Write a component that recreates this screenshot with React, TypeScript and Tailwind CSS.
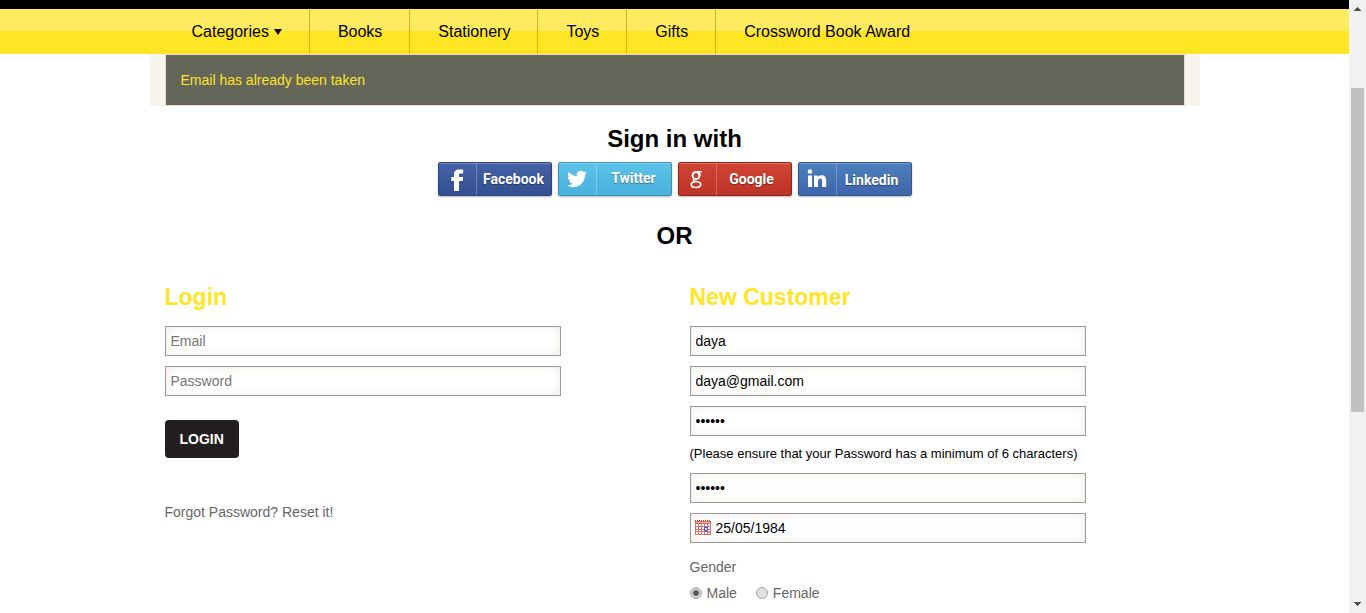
import React from "react";

const field =
  "block w-full h-[30px] border border-[#999] bg-white px-[5px] text-[14px] text-black placeholder:text-[#757575] outline-none shadow-[inset_0_0_10px_#eeece5]";

const navItems = ["Books", "Stationery", "Toys", "Gifts", "Crossword Book Award"];

function FacebookIcon() {
  return (
    <svg viewBox="0 0 24 24" className="size-6" fill="#fff" aria-hidden="true">
      <path d="M9 24v-10H6.300v-4H9V7.500C9 4 11 2.500 14 2.500h4.200v4H15.500c-1.200 0-1.500.5-1.500 1.500v2h4.200l-.5 4H14v10z" />
    </svg>
  );
}

function TwitterIcon() {
  return (
    <svg viewBox="0 0 24 24" className="size-5" fill="#fff" aria-hidden="true">
      <path d="M23.950 4.570a10 10 0 0 1-2.820.775 4.958 4.958 0 0 0 2.163-2.723c-.951.555-2.005.959-3.127 1.184a4.920 4.920 0 0 0-8.384 4.482C7.690 8.095 4.067 6.130 1.640 3.162a4.822 4.822 0 0 0-.666 2.475c0 1.710.870 3.213 2.188 4.096a4.904 4.904 0 0 1-2.228-.616v.060a4.923 4.923 0 0 0 3.946 4.827 4.996 4.996 0 0 1-2.212.085 4.936 4.936 0 0 0 4.604 3.417 9.867 9.867 0 0 1-6.102 2.105c-.390 0-.779-.023-1.170-.067a13.995 13.995 0 0 0 7.557 2.209c9.053 0 13.998-7.496 13.998-13.985 0-.210 0-.420-.015-.630A9.935 9.935 0 0 0 24 4.590z" />
    </svg>
  );
}

function GoogleIcon() {
  return (
    <svg viewBox="0 0 24 24" className="size-6" fill="none" stroke="#fff" aria-hidden="true">
      <ellipse cx="11" cy="8.500" rx="3.400" ry="3.600" strokeWidth="2" />
      <path d="M11.500 4.700h5.500" strokeWidth="1.400" />
      <path d="M13.500 5c1.300 1 1.700 2.200 1.600 3.600" strokeWidth="1.400" />
      <path d="M9.500 11.800c-1.300.8-1.900 2.200.2 2.700" strokeWidth="1.400" />
      <path d="M9.700 14.300c3 .5 6 .6 6 3s-2 3.200-4.800 3.200-4.700-.9-4.700-2.700c0-1.700 1.500-2.700 3.800-3.100" strokeWidth="1.700" />
    </svg>
  );
}

function LinkedinIcon() {
  return (
    <svg viewBox="0 0 24 24" className="size-6" fill="#fff" aria-hidden="true">
      <circle cx="5" cy="4.500" r="2.300" />
      <path d="M3 8.500h4V20H3zM9 8.500h3.800v1.600C13.500 8.900 14.700 8.200 16.400 8.200c3.300 0 4.800 2 4.800 5.300V20h-4v-6c0-1.600-.5-2.500-1.900-2.500S13 12.500 13 14v6H9z" />
    </svg>
  );
}

const socials = [
  { name: "Facebook", Icon: FacebookIcon, tone: "border-[#2b4580] bg-linear-to-b from-[#4462a6] to-[#344f90]", pad: "" },
  { name: "Twitter", Icon: TwitterIcon, tone: "border-[#3c8fb0] bg-linear-to-b from-[#5bc2e8] to-[#49b1de]", pad: "pb-[2px]" },
  { name: "Google", Icon: GoogleIcon, tone: "border-[#8f261c] bg-linear-to-b from-[#cf4435] to-[#bd3327]", pad: "pr-1" },
  { name: "Linkedin", Icon: LinkedinIcon, tone: "border-[#30548b] bg-linear-to-b from-[#4d80bd] to-[#3f65aa]", pad: "pt-[2px] pr-1" },
];

function CalendarIcon() {
  return (
    <svg viewBox="0 0 16 16" className="size-4" shapeRendering="crispEdges" aria-hidden="true">
      <rect x="0" y="1" width="16" height="14" fill="#dd6f69" />
      <path d="M0 0h1v1h-1zM2 0h1v1h-1zM4 0h1v1h-1zM6 0h1v1h-1zM8 0h1v1h-1zM10 0h1v1h-1zM12 0h1v1h-1zM14 0h1v1h-1z" fill="#9c3a35" />
      <path d="M1 2h14v1H1z" fill="#f0a39e" />
      <path d="M1 4h2v2H1zM4 4h2v2H4zM7 4h2v2H7zM10 4h2v2h-2zM13 4h2v2h-2zM1 7h2v2H1zM4 7h2v2H4zM7 7h2v2H7zM13 7h2v2h-2zM1 10h2v1H1zM4 10h2v1H4zM7 10h2v1H7zM13 10h2v1h-2zM1 12h2v2H1zM4 12h2v2H4zM7 12h2v2H7zM10 12h2v2h-2z" fill="#fff" />
      <path d="M9 7h4v4H9z" fill="#2f62d0" />
      <path d="M10 8h2v2h-2z" fill="#d5e4ff" />
      <path d="M13 12h2v2h-2z" fill="#f3c2be" />
    </svg>
  );
}

function Radio({ label, defaultChecked }: { label: string; defaultChecked?: boolean }) {
  return (
    <label className="flex items-center gap-[5px]">
      <input
        type="radio"
        name="gender"
        defaultChecked={defaultChecked}
        className="size-3 appearance-none rounded-full border border-[#a5a5a5] bg-[#e0e0e0] checked:bg-[radial-gradient(circle,#555_0_2px,#e0e0e0_4px)]"
      />
      {label}
    </label>
  );
}

export default function App() {
  return (
    <div className="flex h-screen overflow-hidden bg-white font-['Liberation_Sans',Arial,sans-serif] text-[14px] text-[#666]">
      <div className="min-w-0 flex-1 overflow-hidden">
        <header className="border-t-[9px] border-black">
          <nav className="bg-linear-to-b from-[#ffeb60] from-50% to-[#ffe523] to-50%">
            <ul className="mx-auto flex h-[45px] max-w-[1050px] px-[15px] text-[16px] text-black">
              <li className="border-r border-[#d0b712]">
                <a href="#categories" className="flex h-full items-center gap-[5px] px-[27px]">
                  Categories
                  <svg viewBox="0 0 8 6" className="h-1.5 w-2" aria-hidden="true">
                    <path d="M0 0h8L4 6z" />
                  </svg>
                </a>
              </li>
              {navItems.map((item) => (
                <li key={item} className="border-r border-[#d0b712] last:border-r-0">
                  <a href={"#" + item} className="flex h-full items-center pr-[27px] pl-7">
                    {item}
                  </a>
                </li>
              ))}
            </ul>
          </nav>
        </header>

        <main className="mx-auto max-w-[1050px]">
          <div className="bg-[#f8f5ee] px-[15px]">
            <p role="alert" className="border border-[#ebd9d5] bg-[#646659] px-[15px] py-[15px] leading-[20px] text-[#ffe523]">
              Email has already been taken
            </p>
          </div>

          <section className="pt-[18px] text-center text-black">
            <h2 className="text-[24px] leading-[30px] font-bold">Sign in with</h2>
            <div className="mt-2 flex justify-center gap-[6px]">
              {socials.map(({ name, Icon, tone, pad }) => (
                <button
                  key={name}
                  type="button"
                  className={`flex h-[34px] w-[114px] items-center rounded-[2px] border shadow-[0_1px_2px_#0004,inset_0_1px_0_#ffffff40] ${tone}`}
                >
                  <span className="flex h-full w-[38px] items-center justify-center border-r border-white/25">
                    <Icon />
                  </span>
                  <span className={`flex-1 font-[Roboto,sans-serif] text-[14px] font-bold text-white [text-shadow:0_1px_1px_#0006] ${pad}`}>
                    {name}
                  </span>
                </button>
              ))}
            </div>
            <h2 className="mt-[25px] text-[24px] leading-[30px] font-bold">OR</h2>
          </section>

          <div className="mt-[31px] grid grid-cols-2">
            <form className="px-[15px]">
              <h3 className="text-[23px] leading-[30px] font-bold text-[#ffe523]">Login</h3>
              <div className="mt-[14px] flex w-4/5 flex-col gap-[10px]">
                <input type="email" aria-label="Email" placeholder="Email" className={field} />
                <input type="password" aria-label="Password" placeholder="Password" className={field} />
              </div>
              <button type="button" className="mt-6 h-[38px] rounded-[4px] bg-[#231f20] px-[15px] font-bold text-white">
                LOGIN
              </button>
              <p className="mt-11 leading-[20px]">
                <a href="#reset">Forgot Password? Reset it!</a>
              </p>
            </form>

            <form className="px-[15px]">
              <h3 className="text-[23px] leading-[30px] font-bold text-[#ffe523]">New Customer</h3>
              <div className="mt-[14px] flex w-4/5 flex-col gap-[10px]">
                <input type="text" aria-label="Name" defaultValue="daya" className={field} />
                <input type="email" aria-label="Email" defaultValue="daya@gmail.com" className={field} />
                <input type="password" aria-label="Password" defaultValue="abcdef" className={field} />
                <p className="pb-[2px] text-[13px] leading-[15px] text-black">
                  (Please ensure that your Password has a minimum of 6 characters)
                </p>
                <input type="password" aria-label="Confirm password" defaultValue="abcdef" className={field} />
                <label className="flex h-[30px] items-center gap-[5px] border border-[#999] px-[4px] shadow-[inset_0_0_10px_#eeece5]">
                  <CalendarIcon />
                  <input type="text" aria-label="Date of birth" defaultValue="25/05/1984" className="min-w-0 flex-1 bg-transparent text-black outline-none" />
                </label>
              </div>
              <fieldset className="mt-[14px] leading-[20px]">
                <legend>Gender</legend>
                <div className="mt-[6px] flex gap-[19px]">
                  <Radio label="Male" defaultChecked />
                  <Radio label="Female" />
                </div>
              </fieldset>
            </form>
          </div>
        </main>
      </div>

      <div className="flex w-[17px] flex-col items-center justify-between bg-[#f1f1f1] py-[7px]" aria-hidden="true">
        <svg viewBox="0 0 7 4" className="h-1 w-[7px]" fill="#505050" shapeRendering="crispEdges">
          <path d="M3 0h1v1h1v1h1v1h1v1H0V3h1V2h1V1h1z" />
        </svg>
        <div className="flex w-full flex-1 flex-col px-[2px]">
          <div className="flex-[77]" />
          <div className="flex-[324] bg-[#c1c1c1]" />
          <div className="flex-[190]" />
        </div>
        <svg viewBox="0 0 7 4" className="h-1 w-[7px]" fill="#505050" shapeRendering="crispEdges">
          <path d="M0 0h7v1H6v1H5v1H4v1H3V3H2V2H1V1H0z" />
        </svg>
      </div>
    </div>
  );
}
